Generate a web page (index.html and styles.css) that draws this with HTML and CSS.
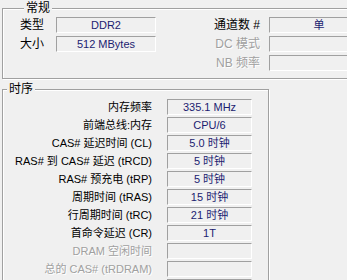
FILE: index.html
```html
<!DOCTYPE html>
<html lang="zh-CN">
<head>
    <meta charset="UTF-8">
    <title>内存</title>
    <link rel="stylesheet" href="styles.css">
</head>
<body>
    <div class="panel">
        <fieldset class="group group-general">
            <legend>常规</legend>
            <div class="general-grid">
                <span class="label">类型</span>
                <span class="field">DDR2</span>
                <span class="label label-right">通道数 #</span>
                <span class="field">单</span>

                <span class="label">大小</span>
                <span class="field">512 MBytes</span>
                <span class="label label-right disabled">DC 模式</span>
                <span class="field"></span>

                <span></span>
                <span></span>
                <span class="label label-right disabled">NB 频率</span>
                <span class="field"></span>
            </div>
        </fieldset>

        <fieldset class="group group-timing">
            <legend>时序</legend>
            <div class="timing-grid">
                <span class="label">内存频率</span>
                <span class="field">335.1 MHz</span>
                <span class="label">前端总线:内存</span>
                <span class="field">CPU/6</span>
                <span class="label">CAS# 延迟时间 (CL)</span>
                <span class="field">5.0 时钟</span>
                <span class="label">RAS# 到 CAS# 延迟 (tRCD)</span>
                <span class="field">5 时钟</span>
                <span class="label">RAS# 预充电 (tRP)</span>
                <span class="field">5 时钟</span>
                <span class="label">周期时间 (tRAS)</span>
                <span class="field">15 时钟</span>
                <span class="label">行周期时间 (tRC)</span>
                <span class="field">21 时钟</span>
                <span class="label">首命令延迟 (CR)</span>
                <span class="field">1T</span>
                <span class="label disabled">DRAM 空闲时间</span>
                <span class="field"></span>
                <span class="label disabled">总的 CAS# (tRDRAM)</span>
                <span class="field"></span>
                <span class="label"></span>
                <span class="field"></span>
            </div>
        </fieldset>
    </div>
</body>
</html>
```

FILE: styles.css
```css
html, body {
    margin: 0;
    padding: 0;
    background: #f0f0f0;
    overflow: hidden;
}

body {
    font-family: "Liberation Sans", "Noto Sans CJK SC", sans-serif;
    font-size: 11px;
    line-height: 16px;
    color: #000;
}

.panel {
    box-sizing: border-box;
    width: 347px;
    height: 280px;
    padding: 1px 0 0 2px;
    overflow: hidden;
}

/* 分组框 (etched) */
.group {
    box-sizing: border-box;
    margin: 0;
    min-width: 0;
    border: 1px solid #a0a0a0;
    box-shadow: inset 1px 1px 0 #fff, 1px 1px 0 #fff;
}

.group legend {
    margin-left: 4px;
    padding: 0 2px;
    font-size: 12px;
    line-height: 14px;
    background: #f0f0f0;
}

.group-general {
    width: 430px;
    padding: 2px 0 7px 17px;
}

.group-timing {
    width: 267px;
    margin-top: 3px;
    padding: 3px 0 10px 0;
}

.general-grid {
    display: grid;
    grid-template-columns: 36px 100px 113px 100px;
    grid-auto-rows: 16px;
    row-gap: 3px;
}

.timing-grid {
    display: grid;
    grid-template-columns: 149px 85px;
    grid-auto-rows: 16px;
    column-gap: 15px;
    row-gap: 2px;
}

.label {
    white-space: nowrap;
    font-size: 11px;
}

.general-grid .label {
    font-size: 12px;
}

.label-right {
    text-align: right;
    padding-right: 9px;
}

.timing-grid .label {
    text-align: right;
}

.disabled {
    color: #a0a0a0;
    text-shadow: 1px 1px 0 #fff;
}

.field {
    box-sizing: border-box;
    height: 16px;
    border-top: 1px solid #a0a0a0;
    border-left: 1px solid #a0a0a0;
    border-right: 1px solid #fff;
    border-bottom: 1px solid #fff;
    text-align: center;
    line-height: 14px;
    color: #1c1c70;
    white-space: nowrap;
}
```
